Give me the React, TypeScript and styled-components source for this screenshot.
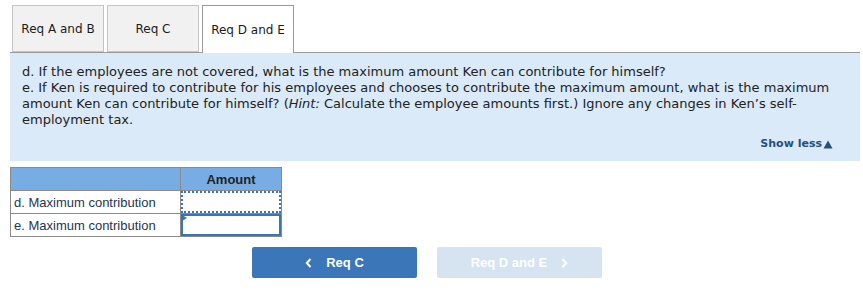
import { FC } from 'react'
import styled, { createGlobalStyle } from 'styled-components'

const GlobalStyle = createGlobalStyle`
	body {
		margin: 0;
		background: #fff;
	}
`

const Page = styled.div`
	padding: 5px 3px 0 10px;
	width: 863px;
	box-sizing: border-box;
`

const TabBar = styled.div`
	display: flex;
	gap: 3px;
	padding-left: 2px;
	border-bottom: 1px solid #9a9a9a;
	height: 47px;
`

const Tab = styled.div<{ $active?: boolean }>`
	width: 92px;
	height: ${(p) => (p.$active ? '48px' : '47px')};
	box-sizing: border-box;
	display: flex;
	align-items: center;
	justify-content: center;
	font-family: 'DejaVu Sans', Verdana, sans-serif;
	font-size: 12px;
	color: #1b1b1b;
	background: ${(p) => (p.$active ? '#fff' : '#f1f1f1')};
	border: 1px solid ${(p) => (p.$active ? '#9a9a9a' : '#c4c4c4')};
	border-bottom: ${(p) => (p.$active ? 'none' : '1px solid #c4c4c4')};
`

const Panel = styled.div`
	background: #daeaf8;
	padding: 11px 27px 9px 12px;
	font-family: 'DejaVu Sans', Verdana, sans-serif;
	font-size: 13px;
	line-height: 16px;
	color: #222;
`

const ShowLess = styled.div`
	display: flex;
	justify-content: flex-end;
	align-items: center;
	gap: 1px;
	margin-top: 8px;
	font-weight: bold;
	font-size: 11px;
	color: #24507e;
`

const Table = styled.table`
	margin-top: 6px;
	border-collapse: collapse;
	font-family: 'Liberation Sans', Arial, sans-serif;
	font-size: 13px;
`

const HeadCell = styled.th`
	background: #78ade4;
	border: 1px solid #8a8a8a;
	height: 22px;
	padding: 0;
	font-weight: bold;
	font-size: 13px;
	color: #222;
	text-align: center;
`

const LabelCell = styled.td`
	width: 170px;
	height: 22px;
	border: 1px solid #8a8a8a;
	padding: 0 0 0 3px;
	color: #1f3650;
	box-sizing: border-box;
`

const InputCell = styled.td`
	width: 100px;
	padding: 0;
	border: 1px solid #8a8a8a;
	position: relative;
`

const AmountInput = styled.div<{ $focused?: boolean }>`
	height: 22px;
	box-sizing: border-box;
	background: #fff;
	border: 2px ${(p) => (p.$focused ? 'solid' : 'dotted')} #3b74b6;
`

const Marker = styled.div`
	position: absolute;
	left: 1px;
	top: 1px;
	width: 0;
	height: 0;
	border-top: 3px solid transparent;
	border-bottom: 3px solid transparent;
	border-left: 5px solid #3b74b6;
`

const NavRow = styled.div`
	display: flex;
	gap: 20px;
	margin: 10px 0 0 242px;
`

const NavButton = styled.div<{ $disabled?: boolean }>`
	width: 165px;
	height: 31px;
	border-radius: 2px;
	display: flex;
	align-items: center;
	justify-content: center;
	gap: 14px;
	font-family: 'Liberation Sans', Arial, sans-serif;
	font-weight: bold;
	font-size: 13px;
	color: #fff;
	background: ${(p) => (p.$disabled ? '#d6e3f1' : '#3a76b8')};
`

const Chevron: FC<{ dir: 'left' | 'right' }> = ({ dir }) => (
	<svg width='7' height='10' viewBox='0 0 7 10'>
		<path
			d={dir === 'left' ? 'M5.5 1 L1.8 5 L5.5 9' : 'M1.5 1 L5.2 5 L1.5 9'}
			fill='none'
			stroke='#fff'
			strokeWidth='2'
		/>
	</svg>
)

const App: FC = () => {
	return (
		<Page>
			<GlobalStyle />
			<TabBar>
				<Tab>Req A and B</Tab>
				<Tab>Req C</Tab>
				<Tab $active>Req D and E</Tab>
			</TabBar>
			<Panel>
				d. If the employees are not covered, what is the maximum amount Ken can contribute for
				himself?
				<br />
				e. If Ken is required to contribute for his employees and chooses to contribute the
				maximum amount, what is the maximum amount Ken can contribute for himself? (<i>Hint:</i>{' '}
				Calculate the employee amounts first.) Ignore any changes in Ken’s self-employment tax.
				<ShowLess>
					Show less
					<svg width='10' height='9' viewBox='0 0 10 9'>
						<path d='M5 0.5 L9.5 8.5 L0.5 8.5 Z' fill='#24507e' />
					</svg>
				</ShowLess>
			</Panel>
			<Table>
				<thead>
					<tr>
						<HeadCell></HeadCell>
						<HeadCell>Amount</HeadCell>
					</tr>
				</thead>
				<tbody>
					<tr>
						<LabelCell>d. Maximum contribution</LabelCell>
						<InputCell>
							<AmountInput />
						</InputCell>
					</tr>
					<tr>
						<LabelCell>e. Maximum contribution</LabelCell>
						<InputCell>
							<AmountInput $focused />
							<Marker />
						</InputCell>
					</tr>
				</tbody>
			</Table>
			<NavRow>
				<NavButton>
					<Chevron dir='left' />
					Req C
				</NavButton>
				<NavButton $disabled>
					Req D and E
					<Chevron dir='right' />
				</NavButton>
			</NavRow>
		</Page>
	)
}

export default App
